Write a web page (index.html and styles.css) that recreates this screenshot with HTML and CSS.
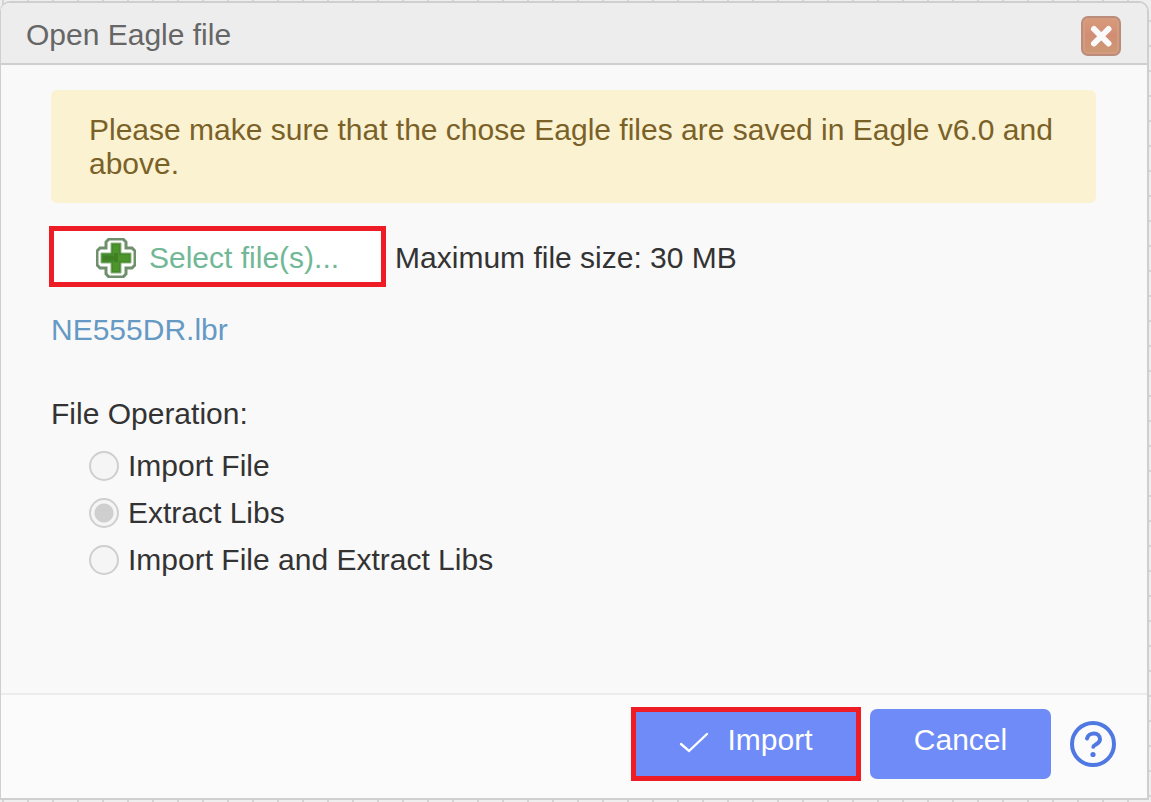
FILE: index.html
```
<!DOCTYPE html>
<html lang="en">
<head>
<meta charset="utf-8">
<title>Open Eagle file</title>
<link rel="stylesheet" href="styles.css">
</head>
<body>
<section class="dialog" role="dialog" aria-labelledby="dialog-title">
  <header class="dialog-header">
    <h1 class="dialog-title" id="dialog-title">Open Eagle file</h1>
    <button class="close-button" type="button" aria-label="Close">
      <svg class="close-icon" viewBox="0 0 40 40" aria-hidden="true">
        <defs>
          <linearGradient id="close-fill" x1="0" y1="0" x2="0" y2="1">
            <stop offset="0" stop-color="#d99b7b"/>
            <stop offset=".5" stop-color="#d18d74"/>
            <stop offset="1" stop-color="#cb9a74"/>
          </linearGradient>
        </defs>
        <rect x="1" y="1" width="38" height="38" rx="6" fill="url(#close-fill)" stroke="#ba8c7b" stroke-width="2"/>
        <rect x="3" y="3" width="34" height="34" rx="4" fill="none" stroke="#d59b7e" stroke-width="2"/>
        <path d="M13 13L27.500 27.500M27.500 13L13 27.500" stroke="#fafafa" stroke-width="6" stroke-linecap="round"/>
      </svg>
    </button>
  </header>
  <form class="dialog-form">
    <main class="dialog-body">
      <p class="notice">Please make sure that the chose Eagle files are saved in Eagle v6.0 and above.</p>
      <div class="select-row">
        <button class="select-button" type="button">
          <svg class="plus-icon" viewBox="0 0 40 40" aria-hidden="true">
            <path d="M13 1H27L30 4V10H36L39 13V27L36 30H30V36L27 39H13L10 36V30H4L1 27V13L4 10H10V4Z" fill="#fff" stroke="#6f8f6d" stroke-width="3"/>
            <path d="M15 5H25V15H35V25H25V35H15V25H5V15H15Z" fill="#43882a" stroke="#8fb680" stroke-width="1"/>
            <path d="M20 7V33M20 20H33" stroke="#4d942c" stroke-width="6"/>
            <path d="M7 20H22M20 15V24" stroke="#3f8022" stroke-width="4"/>
          </svg>
          <span>Select file(s)...</span>
        </button>
        <span class="size-hint">Maximum file size: 30 MB</span>
      </div>
      <a class="file-name" href="#">NE555DR.lbr</a>
      <fieldset class="operations">
        <legend class="operations-title">File Operation:</legend>
        <label class="option"><input class="radio" type="radio" name="operation">Import File</label>
        <label class="option"><input class="radio" type="radio" name="operation" checked>Extract Libs</label>
        <label class="option"><input class="radio" type="radio" name="operation">Import File and Extract Libs</label>
      </fieldset>
    </main>
    <footer class="dialog-footer">
      <button class="action import-button" type="button">
        <svg class="check-icon" viewBox="0 0 30 22" aria-hidden="true">
          <path d="M2 12L10 19L28 2" fill="none" stroke="#fff" stroke-width="2.4" stroke-linecap="round"/>
        </svg>
        <span>Import</span>
      </button>
      <button class="action cancel-button" type="button">Cancel</button>
      <button class="help-button" type="button" aria-label="Help">
        <svg class="help-icon" viewBox="0 0 46 46" aria-hidden="true">
          <circle cx="23" cy="23" r="21" fill="none" stroke="#4f78e3" stroke-width="4"/>
          <path d="M17 17.500C18.500 11 30 10.500 30 18.500C30 23 23.500 23.500 23.300 25.800" fill="none" stroke="#4f78e3" stroke-width="4" stroke-linecap="round"/>
          <circle cx="23" cy="33.500" r="2.600" fill="#4f78e3"/>
        </svg>
      </button>
    </footer>
  </form>
</section>
</body>
</html>
```
FILE: styles.css
```
* {
  box-sizing: border-box;
}

body {
  display: flex;
  min-height: 100vh;
  margin: 0;
  padding: 1px 2px 2px 0;
  background-color: #eee;
  background-image:
    linear-gradient(90deg, #d4d4d4 2px, transparent 2px),
    linear-gradient(#d4d4d4 2px, transparent 2px);
  background-size: 25px 25px;
  background-position: 2px 20px;
  font-family: "Liberation Sans", Arial, sans-serif;
  font-size: 30px;
  line-height: 34px;
  color: #333;
}

button {
  margin: 0;
  padding: 0;
  border: 0;
  background: none;
  font: inherit;
  cursor: pointer;
}

svg {
  display: block;
}

.dialog {
  display: flex;
  flex: 1;
  flex-direction: column;
  overflow: hidden;
  border: 2px solid #cfcfcf;
  border-left-width: 1px;
  border-radius: 10px 10px 0 0;
  background: #f9f9f9;
}

.dialog-header {
  display: flex;
  align-items: center;
  justify-content: space-between;
  height: 62px;
  padding: 0 26px 0 25px;
  border-bottom: 2px solid #cfcfcf;
  background: #ededed;
}

.dialog-title {
  margin: 0;
  padding-top: 4px;
  font-size: 30px;
  font-weight: 400;
  color: #666;
}

.close-button {
  padding-top: 6px;
}

.close-icon,
.plus-icon {
  width: 40px;
  height: 40px;
}

.dialog-form {
  display: flex;
  flex: 1;
  flex-direction: column;
}

.dialog-body {
  display: flex;
  flex: 1;
  flex-direction: column;
  align-items: flex-start;
  padding: 25px 51px 0 50px;
}

.notice {
  align-self: stretch;
  margin: 0 0 23px;
  padding: 23px 38px 22px;
  border-radius: 6px;
  background: #fbf2d1;
  color: #7a6128;
}

.select-row {
  display: flex;
  align-items: center;
  gap: 9px;
  margin-left: -2px;
}

.select-button {
  display: flex;
  align-items: center;
  gap: 13px;
  height: 61px;
  padding: 2px 42px 0 42px;
  border: 5px solid #ee1c25;
  background: #fff;
  color: #72b896;
}

.size-hint {
  padding-top: 2px;
}

.file-name {
  margin-top: 26px;
  color: #6699c4;
  text-decoration: none;
}

.operations {
  display: flex;
  flex-direction: column;
  gap: 13px;
  margin: 50px 0 0;
  padding: 18px 0 0 38px;
  border: 0;
}

.operations-title {
  padding: 0;
  margin-left: -38px;
}

.option {
  display: flex;
  align-items: center;
  gap: 9px;
}

.radio {
  flex: none;
  appearance: none;
  width: 30px;
  height: 30px;
  margin: 0;
  border: 2px solid #cfcfcf;
  border-radius: 50%;
  background: #f5f5f5;
}

.radio:checked {
  background: radial-gradient(circle, #cfcfcf 9px, #f5f5f5 10px);
}

.dialog-footer {
  display: flex;
  align-items: center;
  justify-content: flex-end;
  padding: 12px 31px 17px;
  border-top: 2px solid #ececec;
  background: #fbfbfb;
}

.action {
  height: 70px;
  padding-bottom: 8px;
  background: #6e8bf7;
  color: #fff;
}

.import-button {
  display: flex;
  align-items: center;
  justify-content: center;
  gap: 18px;
  width: 230px;
  height: 74px;
  border: 5px solid #ee1c25;
}

.check-icon {
  width: 30px;
  height: 22px;
  margin-top: 6px;
}

.cancel-button {
  width: 181px;
  margin: 0 19px 0 9px;
  border-radius: 7px;
}

.help-icon {
  width: 46px;
  height: 46px;
}
```
